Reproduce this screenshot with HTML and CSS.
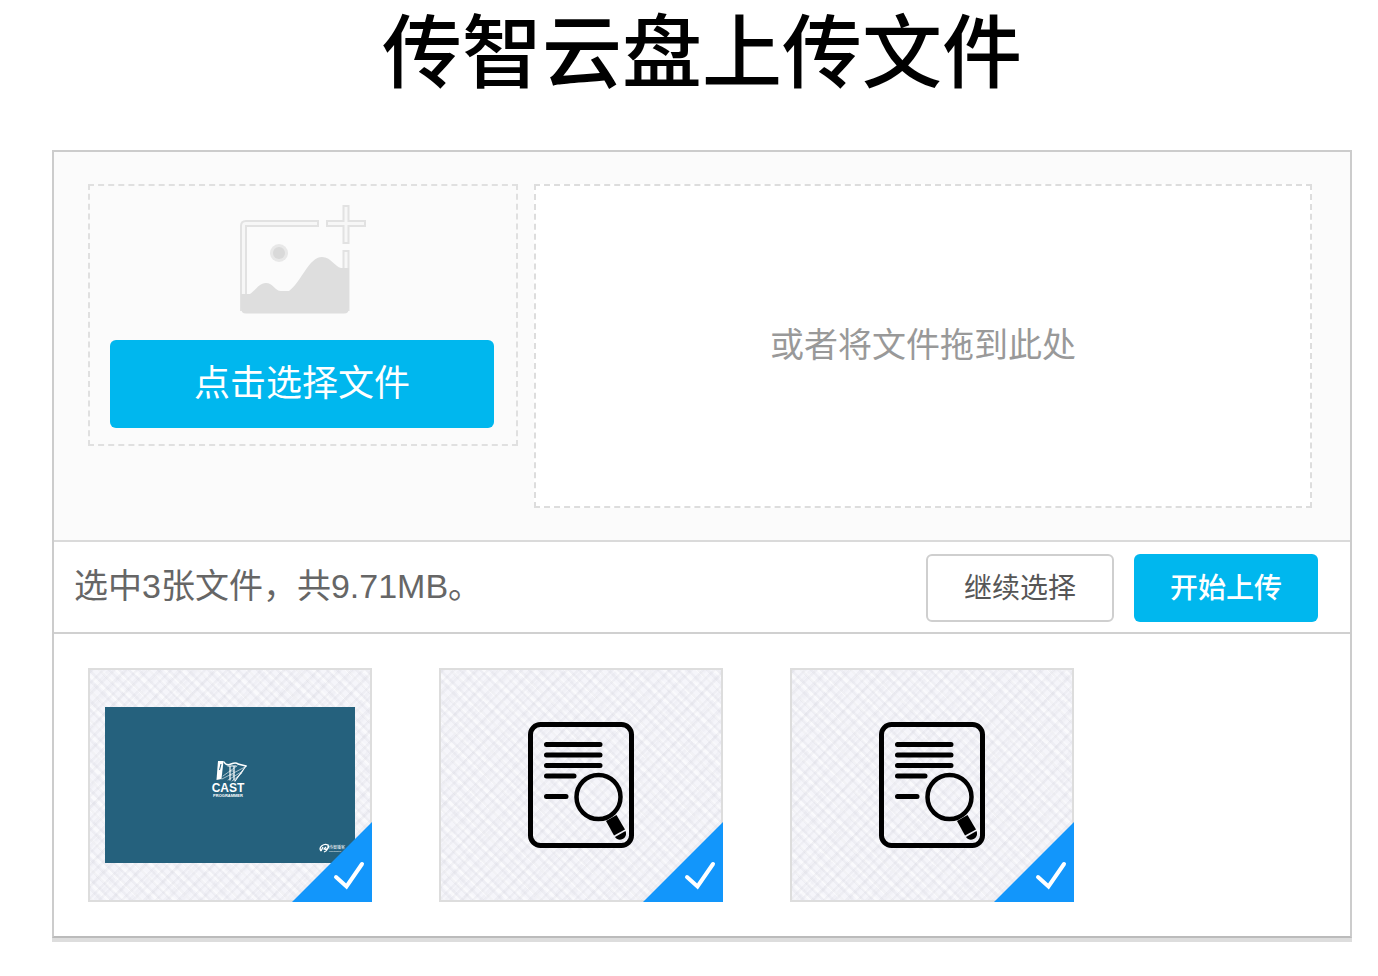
FILE: index.html
```html
<!DOCTYPE html>
<html lang="zh-CN">
<head>
    <meta charset="UTF-8">
    <meta name="viewport" content="width=device-width, initial-scale=1.0">
    <title>传智云盘上传文件</title>
    <link rel="stylesheet" href="styles.css">
</head>
<body>
    <!-- 公用图标 -->
    <svg class="symbols" aria-hidden="true">
        <symbol id="icon-doc" viewBox="0 0 106 126">
            <rect x="2.5" y="2.5" width="101" height="121" rx="10" fill="none" stroke="#000" stroke-width="5"/>
            <path d="M18.500 22.500H72M18.500 33H72M18.500 43.500H72M18.500 54H46M18.500 74.500H38" fill="none" stroke="#000" stroke-width="5" stroke-linecap="round"/>
            <circle cx="70.500" cy="75" r="22" fill="none" stroke="#000" stroke-width="4.500"/>
            <path d="M78 99L88.500 93L97 107.500L86 113.500Z"/>
            <path d="M87 115L97.500 109C100.500 116 91 121 87 115Z"/>
        </symbol>
        <symbol id="icon-check" viewBox="0 0 80 80">
            <path d="M80 0V80H0Z" fill="#1296fb"/>
            <path d="M44 55L54.500 64.500L70 42" fill="none" stroke="#fff" stroke-width="4" stroke-linecap="round"/>
        </symbol>
    </svg>

    <div class="page">
        <h1>传智云盘上传文件</h1>

        <div class="uploader">
            <div class="upload-area">
                <div class="picker">
                    <svg class="picker-icon" width="128" height="112" viewBox="0 0 128 112" aria-hidden="true">
                        <g fill="#f7f7f7" stroke="#e2e2e2" stroke-width="2">
                            <path d="M80 22V17H8Q3 17 3 22V106H8V22Z"/>
                            <path d="M105.500 80V47H110.500V106H105.500Z"/>
                            <path d="M105.500 2H110.500V17H127V22H110.500V39H105.500V22H89V17H105.500Z"/>
                        </g>
                        <path d="M3 90H12C18 86 21 79 28 79C35 79 37 87 43 87H51C64 77 71 53 84 53C93 53 97 63 103 64H111V104Q111 109.500 106 109.500H8Q3 109.500 3 104Z" fill="#dedede"/>
                        <circle cx="41" cy="49" r="9" fill="#e8e8e8"/>
                        <circle cx="41" cy="49" r="6" fill="#d9d9d9"/>
                    </svg>
                    <button type="button" class="btn-pick">点击选择文件</button>
                </div>
                <div class="drop-zone">或者将文件拖到此处</div>
            </div>

            <div class="status-bar">
                <p class="status-text">选中3张文件，共9.71MB。</p>
                <div class="actions">
                    <button type="button" class="btn btn-more">继续选择</button>
                    <button type="button" class="btn btn-upload">开始上传</button>
                </div>
            </div>

            <ul class="file-list">
                <li class="file-item">
                    <svg class="photo" width="250" height="156" viewBox="0 0 250 156" role="img" aria-label="CAST PROGRAMMER">
                        <rect width="250" height="156" fill="#25617d"/>
                        <path d="M113 54H118.500L116.500 72L111.500 73Z" fill="#fff"/>
                        <path d="M116 57L114.500 63" stroke="#25617d"/>
                        <g fill="none" stroke="#fff" stroke-linecap="round">
                            <path d="M119 55Q121 59 126 57Q131 55 133 57L141 59" stroke-width="1.500"/>
                            <path d="M125 59V73M129 59V73M123 59H131M141 59L130 74" stroke-width="1.200"/>
                            <path d="M140 60L117 72M138 64L123 73M137 66L127 74M132 59L118 69M125 64H129M125 68H129" stroke-width="0.600"/>
                        </g>
                        <text x="123" y="85" class="logo-name">CAST</text>
                        <text x="123" y="90" class="logo-sub">PROGRAMMER</text>
                        <path d="M216 144C213 140 219 136 223 138C225 141 221 143 219 142L221 140M216 144L218 140M219 145Q224 143 223 138" fill="none" stroke="#fff" stroke-width="1.300"/>
                        <text x="224" y="142" class="mark-name">传智播客</text>
                        <text x="224" y="145" class="mark-url">www.itcast.cn</text>
                    </svg>
                    <svg class="checked" role="img" aria-label="已选中"><use href="#icon-check"/></svg>
                </li>
                <li class="file-item">
                    <svg class="doc" role="img" aria-label="文件"><use href="#icon-doc"/></svg>
                    <svg class="checked" role="img" aria-label="已选中"><use href="#icon-check"/></svg>
                </li>
                <li class="file-item">
                    <svg class="doc" role="img" aria-label="文件"><use href="#icon-doc"/></svg>
                    <svg class="checked" role="img" aria-label="已选中"><use href="#icon-check"/></svg>
                </li>
            </ul>
        </div>
    </div>
</body>
</html>
```

FILE: styles.css
```css
* {
    box-sizing: border-box;
    margin: 0;
    padding: 0;
}
body {
    font-family: "Liberation Sans", Arial, "Noto Sans CJK SC", sans-serif;
    background-color: #fff;
    color: #000;
}
button {
    font-family: inherit;
    cursor: pointer;
}
.symbols {
    position: absolute;
    width: 0;
    height: 0;
}
.page {
    padding: 0 26px 34px 52px;
}
h1 {
    font-size: 80px;
    font-weight: 500;
    line-height: 108px;
    margin-bottom: 42px;
    text-align: center;
}
.uploader {
    border: 2px solid #ccc;
    border-bottom-color: #bbb;
    box-shadow: 0 4px 0 #ddd;
}

/* 选择与拖拽区域 */
.upload-area {
    display: flex;
    align-items: flex-start;
    gap: 16px;
    padding: 32px 38px 32px 34px;
    background-color: #fbfbfb;
    border-bottom: 2px solid #dadada;
}
.picker {
    flex: 0 0 430px;
    display: flex;
    flex-direction: column;
    align-items: center;
    padding: 18px 22px 16px 20px;
    border: 2px dashed #e0e0e0;
}
.picker-icon {
    margin-bottom: 24px;
}
.btn-pick {
    width: 100%;
    height: 88px;
    padding-bottom: 8px;
    border: none;
    border-radius: 6px;
    background-color: #00b7ee;
    color: #fff;
    font-size: 36px;
}
.drop-zone {
    flex: 1;
    display: flex;
    align-items: center;
    justify-content: center;
    height: 324px;
    padding-bottom: 8px;
    border: 2px dashed #ddd;
    background-color: #fff;
    color: #999;
    font-size: 34px;
}

/* 状态栏 */
.status-bar {
    display: flex;
    align-items: center;
    justify-content: space-between;
    padding: 12px 32px 10px 20px;
    border-bottom: 2px solid #d0d0d0;
}
.status-text {
    padding-bottom: 4px;
    color: #666;
    font-size: 34px;
    line-height: 64px;
}
.actions {
    display: flex;
    gap: 20px;
}
.btn {
    height: 68px;
    padding: 0 36px 4px;
    border: none;
    border-radius: 6px;
    font-size: 28px;
}
.btn-more {
    border: 2px solid #cfcfcf;
    background-color: #fff;
    color: #565656;
}
.btn-upload {
    background-color: #00b7ee;
    color: #fff;
    font-weight: 500;
}

/* 文件列表 */
.file-list {
    display: flex;
    flex-wrap: wrap;
    gap: 67px;
    padding: 34px;
    list-style: none;
}
.file-item {
    position: relative;
    display: flex;
    align-items: center;
    justify-content: center;
    width: 284px;
    height: 234px;
    border: 2px solid #ddd;
    background-color: #f5f5fa;
    background-image:
        repeating-linear-gradient(45deg, rgba(205, 205, 215, 0.18) 0 2px, transparent 3px 7px),
        repeating-linear-gradient(135deg, rgba(205, 205, 215, 0.18) 0 2px, transparent 3px 8px),
        repeating-linear-gradient(42deg, rgba(255, 255, 255, 0.5) 0 2px, transparent 4px 11px),
        repeating-linear-gradient(132deg, rgba(210, 210, 220, 0.14) 0 2px, transparent 4px 13px);
}
.doc {
    width: 106px;
    height: 126px;
}
.checked {
    position: absolute;
    right: -2px;
    bottom: -2px;
    width: 80px;
    height: 80px;
}
.logo-name,
.logo-sub {
    font-family: "Liberation Sans Narrow", "Liberation Sans", sans-serif;
    font-weight: bold;
    fill: #fff;
    text-anchor: middle;
}
.logo-name {
    font-size: 12px;
}
.logo-sub {
    font-size: 4px;
}
.mark-name {
    font-size: 4px;
    fill: #fff;
}
.mark-url {
    font-size: 2px;
    fill: #fff;
}
```
